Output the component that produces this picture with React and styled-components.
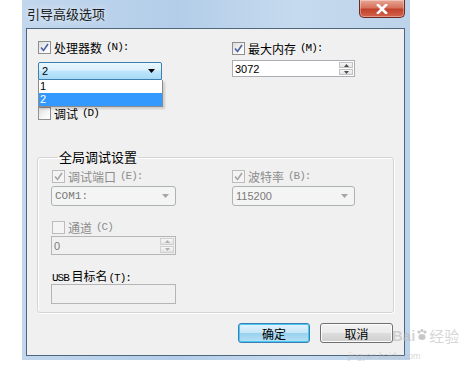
import React from 'react'
import styled, { createGlobalStyle } from 'styled-components'

const Global = createGlobalStyle`
  body { margin: 0; background: #fff; font-family: "Liberation Sans", "Noto Sans CJK SC", sans-serif; }
`

const Page = styled.div`
  position: relative;
  width: 466px;
  height: 373px;
  background: #fff;
  overflow: hidden;
`

const Frame = styled.div`
  margin-left: 22px;
  width: 388px;
  padding: 0 5px 4px 4px;
  box-sizing: border-box;
  background: linear-gradient(90deg, #c2d7ed 0%, #b3cde9 40%, #c6daee 70%, #bcd3ea 100%);
`

const TitleBar = styled.div`
  height: 28px;
  display: flex;
  justify-content: space-between;
  align-items: flex-start;
`

const Title = styled.div`
  padding: 7px 0 0 1px;
  font-family: "Noto Sans CJK SC", sans-serif;
  font-size: 13px;
  line-height: 14px;
  color: #1b1b1b;
  text-shadow: 0 0 6px rgba(255,255,255,0.9);
`

const CloseBtn = styled.div`
  width: 46px;
  height: 18px;
  box-sizing: border-box;
  border: 1px solid #6a2a22;
  border-top: none;
  border-radius: 0 0 5px 5px;
  background: linear-gradient(180deg, #e8a796 0%, #d7725d 45%, #c2422b 55%, #d4644c 100%);
  display: flex;
  align-items: center;
  justify-content: center;
  box-shadow: inset 0 0 0 1px rgba(255,255,255,0.35);
`

const Client = styled.div`
  height: 328px;
  box-sizing: border-box;
  border: 1px solid #4f657c;
  background: #f0f0f0;
  padding: 12px 10px 0 10px;
  font-family: "Noto Sans CJK SC", sans-serif;
  font-size: 12px;
  color: #000;
`

const TopGrid = styled.div`
  display: grid;
  grid-template-columns: 124px 123px;
  column-gap: 70px;
  padding-left: 1px;
`

const Col = styled.div`
  display: flex;
  flex-direction: column;
  align-items: flex-start;
  margin-top: ${p => p.$mt || 0}px;
`

const CheckRow = styled.label`
  display: flex;
  align-items: center;
  gap: 3px;
  height: 13px;
  line-height: 13px;
  margin-top: ${p => p.$mt || 0}px;
  margin-left: ${p => p.$ml || 0}px;
  color: ${p => (p.$disabled ? '#8d8d8d' : '#000')};
  white-space: nowrap;
`

const Acc = styled.span`
  font-family: "Liberation Mono", monospace;
  font-size: 11px;
  letter-spacing: -1px;
  margin-left: 1px;
`

const Box = styled.span`
  width: 13px;
  height: 13px;
  box-sizing: border-box;
  border: 1px solid ${p => (p.$disabled ? '#bcbcbc' : '#8e8f8f')};
  background: ${p => (p.$disabled ? '#f4f4f4' : 'linear-gradient(135deg, #dcdcdc 0%, #f6f6f6 60%, #fff 100%)')};
  display: flex;
  align-items: center;
  justify-content: center;
  flex: none;
`

const Check = ({ checked, disabled }) => (
  <Box $disabled={disabled}>
    {checked && (
      <svg width="9" height="9" viewBox="0 0 9 9">
        <path d="M1 4.5 L3.5 7.5 L8 1" fill="none" stroke={disabled ? '#a6a6a6' : '#4c61a0'} strokeWidth="1.6" />
      </svg>
    )}
  </Box>
)

const ComboWrap = styled.div`
  position: relative;
  margin-top: ${p => p.$mt || 0}px;
`

const Combo = styled.div`
  width: ${p => p.$w}px;
  height: ${p => p.$h}px;
  box-sizing: border-box;
  border: 1px solid ${p => (p.$open ? '#3c7fb1' : '#adb2b5')};
  border-radius: ${p => (p.$open ? '2px 2px 0 0' : '3px')};
  background: ${p =>
    p.$open
      ? 'linear-gradient(180deg, #eaf6fd 0%, #d9f0fc 45%, #bee6fd 50%, #a7d9f5 100%)'
      : '#f4f4f4'};
  display: flex;
  align-items: center;
  justify-content: space-between;
  padding: 0 6px 0 3px;
  font-family: ${p => (p.$mono ? '"Liberation Mono", monospace' : '"Liberation Sans", sans-serif')};
  font-size: 11px;
  color: ${p => (p.$open ? '#000' : '#7a7a7a')};
`

const Arrow = ({ dim }) => (
  <svg width="7" height="4" viewBox="0 0 7 4">
    <path d="M0 0 L7 0 L3.5 4 Z" fill={dim ? '#a5a5a5' : '#000'} />
  </svg>
)

const List = styled.div`
  position: absolute;
  left: 0;
  top: 100%;
  width: 125px;
  box-sizing: border-box;
  border: 1px solid #8c8c8c;
  border-top: none;
  background: #fff;
  box-shadow: 2px 2px 2px rgba(0,0,0,0.15);
  font-family: "Liberation Sans", sans-serif;
  font-size: 11px;
  z-index: 2;
`

const Item = styled.div`
  height: 13px;
  line-height: 13px;
  padding-left: 1px;
  background: ${p => (p.$sel ? '#3399ff' : '#fff')};
  color: ${p => (p.$sel ? '#fff' : '#000')};
`

const Field = styled.div`
  width: ${p => p.$w}px;
  height: ${p => p.$h}px;
  box-sizing: border-box;
  margin-top: ${p => p.$mt || 0}px;
  border: 1px solid ${p => (p.$disabled ? '#b5b5b5' : '#abadb3')};
  background: ${p => (p.$disabled ? '#f0f0f0' : '#fff')};
  display: flex;
  align-items: stretch;
  font-family: "Liberation Sans", sans-serif;
  font-size: 11px;
  color: ${p => (p.$disabled ? '#7a7a7a' : '#000')};
`

const FieldText = styled.div`
  flex: 1;
  display: flex;
  align-items: center;
  padding-left: 2px;
`

const Spin = styled.div`
  width: 16px;
  display: flex;
  flex-direction: column;
  gap: 1px;
  padding: 1px;
  box-sizing: border-box;
`

const SpinBtn = styled.div`
  flex: 1;
  border: 1px solid ${p => (p.$disabled ? '#d0d0d0' : '#c3c3c3')};
  background: linear-gradient(180deg, #f6f6f6, #e3e3e3);
  display: flex;
  align-items: center;
  justify-content: center;
`

const Tri = ({ up, dim }) => (
  <svg width="5" height="3" viewBox="0 0 5 3">
    <path d={up ? 'M0 3 L5 3 L2.5 0 Z' : 'M0 0 L5 0 L2.5 3 Z'} fill={dim ? '#b0b0b0' : '#4d4d4d'} />
  </svg>
)

const Spinner = ({ dim }) => (
  <Spin>
    <SpinBtn $disabled={dim}><Tri up dim={dim} /></SpinBtn>
    <SpinBtn $disabled={dim}><Tri dim={dim} /></SpinBtn>
  </Spin>
)

const Group = styled.fieldset`
  margin: 30px 0 0 0;
  width: 357px;
  box-sizing: border-box;
  border: 1px solid #d5d5d5;
  border-radius: 3px;
  box-shadow: inset 1px 1px 0 #fff, 1px 1px 0 #fff;
  padding: 6px 0 8px 13px;
`

const Legend = styled.legend`
  padding: 0 1px;
  margin-left: 7px;
  font-size: 13px;
  line-height: 14px;
  color: #000;
`

const GroupGrid = styled.div`
  display: grid;
  grid-template-columns: 125px 123px;
  column-gap: 56px;
`

const PlainLabel = styled.div`
  margin-top: ${p => p.$mt || 0}px;
  height: 13px;
  line-height: 13px;
  white-space: nowrap;
`

const Buttons = styled.div`
  display: flex;
  justify-content: flex-end;
  gap: 10px;
  margin-top: 10px;
  padding-right: 1px;
`

const Button = styled.div`
  width: ${p => p.$w}px;
  height: 20px;
  box-sizing: border-box;
  border: 1px solid ${p => (p.$def ? '#3c7fb1' : '#707070')};
  border-radius: 3px;
  background: ${p =>
    p.$def
      ? 'linear-gradient(180deg, #e5f4fc 0%, #c4e5f6 50%, #98d1ef 51%, #b6e0f5 100%)'
      : 'linear-gradient(180deg, #f2f2f2 0%, #ebebeb 50%, #dddddd 51%, #cfcfcf 100%)'};
  box-shadow: ${p => (p.$def ? 'inset 0 0 0 1px #48c8f3' : 'inset 0 0 0 1px #fcfcfc')};
  display: flex;
  align-items: center;
  justify-content: center;
  font-size: 12px;
`

const Watermark = styled.div`
  position: absolute;
  left: 392px;
  top: 322px;
  color: rgba(185, 185, 185, 0.6);
  font-family: "Liberation Sans", sans-serif;
  pointer-events: none;
`

const WmBig = styled.div`
  display: flex;
  align-items: center;
  gap: 2px;
  height: 26px;
`

const WmBai = styled.span`
  font-size: 15px;
  font-weight: bold;
`

const WmCn = styled.span`
  font-family: "Noto Sans CJK SC", sans-serif;
  font-size: 15px;
`

const WmSmall = styled.div`
  font-size: 9px;
  margin: 3px 0 0 -44px;
`

export default function App() {
  return (
    <Page>
      <Global />
      <Frame>
        <TitleBar>
          <Title>引导高级选项</Title>
          <CloseBtn>
            <svg width="12" height="10" viewBox="0 0 12 10">
              <path d="M2 1 L10 9 M10 1 L2 9" stroke="#fff" strokeWidth="2.6" strokeLinecap="square" />
            </svg>
          </CloseBtn>
        </TitleBar>
        <Client>
          <TopGrid>
            <Col>
              <CheckRow><Check checked />处理器数<Acc>(N):</Acc></CheckRow>
              <ComboWrap $mt={8}>
                <Combo $open $w={124} $h={18}>
                  <span>2</span>
                  <Arrow />
                </Combo>
                <List>
                  <Item>1</Item>
                  <Item $sel>2</Item>
                </List>
              </ComboWrap>
              <CheckRow $mt={27}><Check />调试<Acc>(D)</Acc></CheckRow>
            </Col>
            <Col $mt={1}>
              <CheckRow><Check checked />最大内存<Acc>(M):</Acc></CheckRow>
              <Field $w={123} $h={17} $mt={5}>
                <FieldText>3072</FieldText>
                <Spinner />
              </Field>
            </Col>
          </TopGrid>

          <Group>
            <Legend>全局调试设置</Legend>
            <GroupGrid>
              <Col>
                <CheckRow $disabled $ml={1}><Check checked disabled />调试端口<Acc>(E):</Acc></CheckRow>
                <ComboWrap $mt={3}>
                  <Combo $w={125} $h={20} $mono>
                    <span>COM1:</span>
                    <Arrow dim />
                  </Combo>
                </ComboWrap>
                <CheckRow $disabled $ml={1} $mt={15}><Check disabled />通道<Acc>(C)</Acc></CheckRow>
                <Field $w={125} $h={19} $mt={2} $disabled>
                  <FieldText>0</FieldText>
                  <Spinner dim />
                </Field>
                <PlainLabel $mt={14}><Acc>USB</Acc> 目标名<Acc>(T):</Acc></PlainLabel>
                <Field $w={125} $h={20} $mt={2} $disabled />
              </Col>
              <Col>
                <CheckRow $disabled><Check checked disabled />波特率<Acc>(B):</Acc></CheckRow>
                <ComboWrap $mt={3}>
                  <Combo $w={123} $h={20}>
                    <span>115200</span>
                    <Arrow dim />
                  </Combo>
                </ComboWrap>
              </Col>
            </GroupGrid>
          </Group>

          <Buttons>
            <Button $def $w={72}>确定</Button>
            <Button $w={73}>取消</Button>
          </Buttons>
        </Client>
      </Frame>
      <Watermark>
        <WmBig>
          <WmBai>Bai</WmBai>
          <svg width="10" height="12" viewBox="0 0 10 12">
            <circle cx="2" cy="3" r="1.6" fill="rgba(185,185,185,0.8)" />
            <circle cx="5" cy="1.6" r="1.5" fill="rgba(185,185,185,0.8)" />
            <circle cx="8" cy="3" r="1.6" fill="rgba(185,185,185,0.8)" />
            <ellipse cx="5" cy="8" rx="3.6" ry="3" fill="rgba(185,185,185,0.8)" />
          </svg>
          <WmCn>经验</WmCn>
        </WmBig>
        <WmSmall>jingyan.baidu.com</WmSmall>
      </Watermark>
    </Page>
  )
}
